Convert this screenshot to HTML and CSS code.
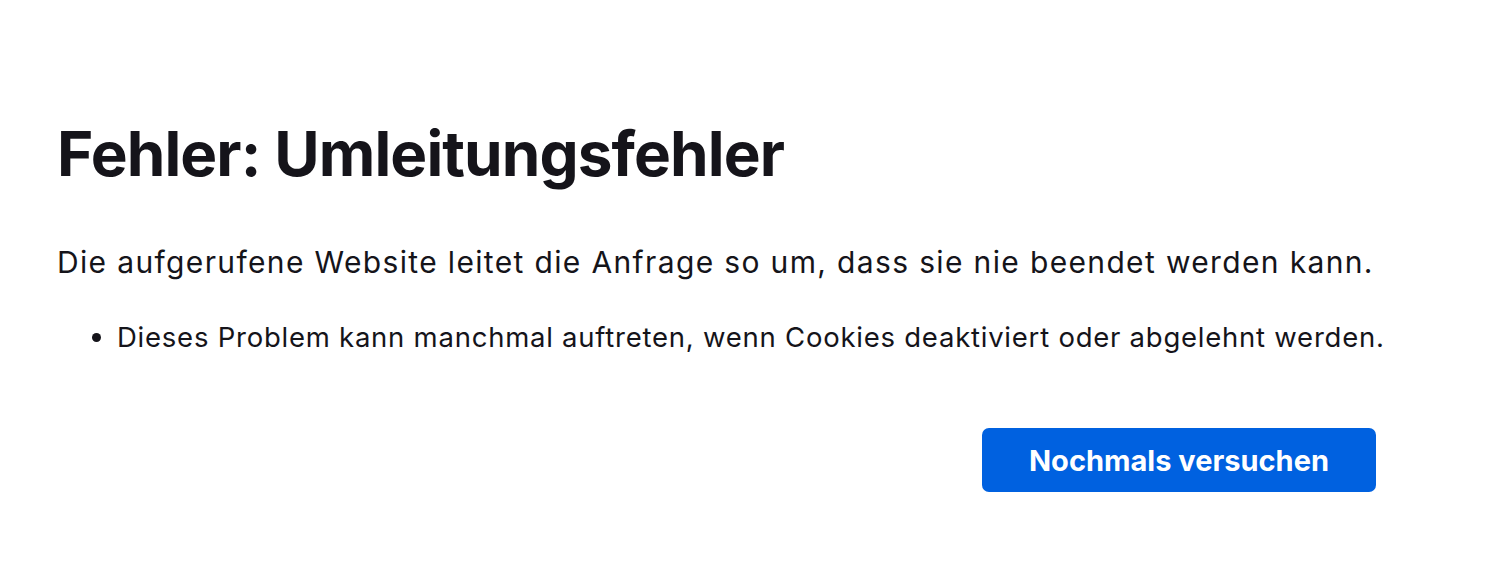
FILE: index.html
```html
<!DOCTYPE html>
<html lang="de">
<head>
    <meta charset="UTF-8">
    <title>Umleitungsfehler</title>
    <link rel="stylesheet" href="styles.css">
</head>
<body>
    <div class="container">
        <h1 class="title">Fehler: Umleitungsfehler</h1>
        <p class="desc">Die aufgerufene Website leitet die Anfrage so um, dass sie nie beendet werden kann.</p>
        <ul class="hints">
            <li>Dieses Problem kann manchmal auftreten, wenn Cookies deaktiviert oder abgelehnt werden.</li>
        </ul>
        <div class="actions">
            <button type="button">Nochmals versuchen</button>
        </div>
    </div>
</body>
</html>
```

FILE: styles.css
```css
* {
    margin: 0;
    padding: 0;
    box-sizing: border-box;
}
body {
    font-family: Inter, "Noto Sans", sans-serif;
    color: #15141a;
    background-color: #fff;
}
.container {
    width: 1319px;
    margin-left: 57px;
    padding-top: 112px;
}
.title {
    font-size: 62px;
    font-weight: 700;
    line-height: 84px;
    letter-spacing: -0.9px;
}
.desc {
    font-size: 30px;
    line-height: 40px;
    letter-spacing: 1.35px;
    margin-top: 46px;
}
.hints {
    margin-top: 36px;
    padding-left: 60px;
    font-size: 27.5px;
    line-height: 38px;
    letter-spacing: 0.76px;
    white-space: nowrap;
}
.actions {
    display: flex;
    justify-content: flex-end;
    margin-top: 72px;
}
button {
    width: 394px;
    height: 64px;
    background-color: #0061e0;
    color: #fff;
    border: none;
    border-radius: 7px;
    font-family: inherit;
    font-size: 29px;
    font-weight: 700;
    cursor: pointer;
}
```
